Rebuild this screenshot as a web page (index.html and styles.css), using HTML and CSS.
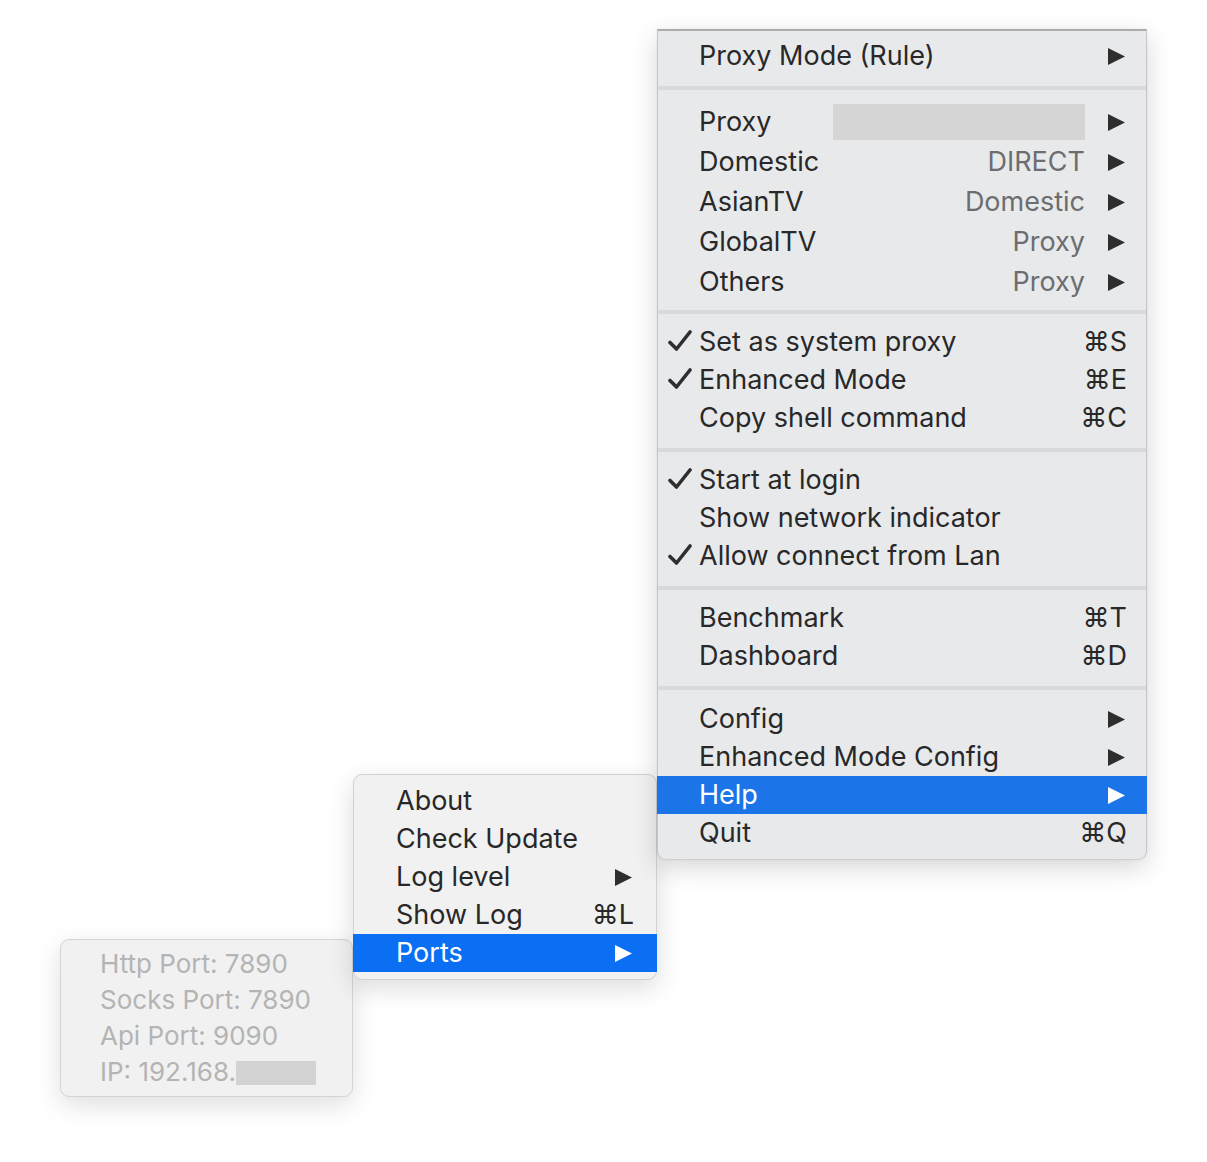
FILE: index.html
```html
<!DOCTYPE html>
<html>
<head>
<meta charset="utf-8">
<link rel="stylesheet" href="styles.css">
</head>
<body>
<div class="stage">
  <div class="menu menu-main">
    <div class="row"><span class="check"></span><span class="label">Proxy Mode (Rule)</span><svg class="arrow" viewBox="0 0 17 17"><path d="M0 0 L17 8.5 L0 17 Z"/></svg></div>
    <div class="sep"></div>
    <div class="group-wide">
      <div class="row row-wide"><span class="check"></span><span class="label">Proxy</span><span class="redact redact-main"></span><svg class="arrow" viewBox="0 0 17 17"><path d="M0 0 L17 8.5 L0 17 Z"/></svg></div>
      <div class="row row-wide"><span class="check"></span><span class="label">Domestic</span><span class="value">DIRECT</span><svg class="arrow" viewBox="0 0 17 17"><path d="M0 0 L17 8.5 L0 17 Z"/></svg></div>
      <div class="row row-wide"><span class="check"></span><span class="label">AsianTV</span><span class="value">Domestic</span><svg class="arrow" viewBox="0 0 17 17"><path d="M0 0 L17 8.5 L0 17 Z"/></svg></div>
      <div class="row row-wide"><span class="check"></span><span class="label">GlobalTV</span><span class="value">Proxy</span><svg class="arrow" viewBox="0 0 17 17"><path d="M0 0 L17 8.5 L0 17 Z"/></svg></div>
      <div class="row row-wide"><span class="check"></span><span class="label">Others</span><span class="value">Proxy</span><svg class="arrow" viewBox="0 0 17 17"><path d="M0 0 L17 8.5 L0 17 Z"/></svg></div>
    </div>
    <div class="sep"></div>
    <div class="row"><span class="check"><svg viewBox="0 0 24 22"><path d="M2 12.5 L8.5 19 L22 2"/></svg></span><span class="label">Set as system proxy</span><span class="key">⌘S</span></div>
    <div class="row"><span class="check"><svg viewBox="0 0 24 22"><path d="M2 12.5 L8.5 19 L22 2"/></svg></span><span class="label">Enhanced Mode</span><span class="key">⌘E</span></div>
    <div class="row"><span class="check"></span><span class="label">Copy shell command</span><span class="key">⌘C</span></div>
    <div class="sep"></div>
    <div class="row"><span class="check"><svg viewBox="0 0 24 22"><path d="M2 12.5 L8.5 19 L22 2"/></svg></span><span class="label">Start at login</span></div>
    <div class="row"><span class="check"></span><span class="label">Show network indicator</span></div>
    <div class="row"><span class="check"><svg viewBox="0 0 24 22"><path d="M2 12.5 L8.5 19 L22 2"/></svg></span><span class="label">Allow connect from Lan</span></div>
    <div class="sep"></div>
    <div class="row"><span class="check"></span><span class="label">Benchmark</span><span class="key">⌘T</span></div>
    <div class="row"><span class="check"></span><span class="label">Dashboard</span><span class="key">⌘D</span></div>
    <div class="sep sep-last"></div>
    <div class="row"><span class="check"></span><span class="label">Config</span><svg class="arrow" viewBox="0 0 17 17"><path d="M0 0 L17 8.5 L0 17 Z"/></svg></div>
    <div class="row"><span class="check"></span><span class="label">Enhanced Mode Config</span><svg class="arrow" viewBox="0 0 17 17"><path d="M0 0 L17 8.5 L0 17 Z"/></svg></div>
    <div class="row active active-main"><span class="check"></span><span class="label">Help</span><svg class="arrow" viewBox="0 0 17 17"><path d="M0 0 L17 8.5 L0 17 Z"/></svg></div>
    <div class="row"><span class="check"></span><span class="label">Quit</span><span class="key">⌘Q</span></div>
  </div>

  <div class="menu menu-help">
    <div class="row"><span class="label">About</span></div>
    <div class="row"><span class="label">Check Update</span></div>
    <div class="row"><span class="label">Log level</span><svg class="arrow" viewBox="0 0 17 17"><path d="M0 0 L17 8.5 L0 17 Z"/></svg></div>
    <div class="row"><span class="label">Show Log</span><span class="key">⌘L</span></div>
    <div class="row active active-sub"><span class="label">Ports</span><svg class="arrow" viewBox="0 0 17 17"><path d="M0 0 L17 8.5 L0 17 Z"/></svg></div>
  </div>

  <div class="menu menu-ports">
    <div class="row row-dis"><span class="label">Http Port: 7890</span></div>
    <div class="row row-dis"><span class="label">Socks Port: 7890</span></div>
    <div class="row row-dis"><span class="label">Api Port: 9090</span></div>
    <div class="row row-dis"><span class="label label-ip">IP: 192.168.<span class="redact redact-ip"></span></span></div>
  </div>
</div>
</body>
</html>
```

FILE: styles.css
```css
html, body {
  margin: 0;
  padding: 0;
  background: #ffffff;
}

.stage {
  position: relative;
  width: 1207px;
  height: 1162px;
  font-family: Inter, "DejaVu Sans", sans-serif;
  font-size: 27px;
  color: #282829;
}

.menu {
  position: absolute;
  box-sizing: border-box;
  display: flex;
  flex-direction: column;
}

.menu-main {
  left: 657px;
  top: 29px;
  width: 490px;
  height: 831px;
  background: #e8e9eb;
  border-top: 2px solid #acacae;
  border-left: 1px solid #c6c6c8;
  border-right: 1px solid #c6c6c8;
  border-bottom: 1px solid #cfcfd1;
  border-radius: 0 0 9px 9px;
  padding: 6px 0 7px;
  box-shadow: 0 8px 26px rgba(0, 0, 0, 0.16), 0 0 2px rgba(0, 0, 0, 0.08);
  z-index: 3;
}

.menu-help {
  left: 353px;
  top: 774px;
  width: 304px;
  height: 206px;
  background: #f1f1f1;
  border: 1px solid #d2d2d2;
  border-radius: 9px;
  padding: 7px 0;
  box-shadow: 0 8px 26px rgba(0, 0, 0, 0.14);
  z-index: 2;
}

.menu-ports {
  left: 60px;
  top: 939px;
  width: 293px;
  height: 158px;
  background: #f1f1f1;
  border: 1px solid #d4d4d4;
  border-radius: 9px;
  padding: 6px 0;
  box-shadow: 0 8px 26px rgba(0, 0, 0, 0.13);
  z-index: 1;
  font-size: 26px;
}

.row {
  display: flex;
  align-items: center;
  box-sizing: border-box;
  height: 38px;
  padding-bottom: 2px;
  flex: none;
  white-space: nowrap;
}

.menu-main .row {
  padding-right: 21px;
}

.row-wide {
  height: 40px;
}

.group-wide {
  padding-top: 3px;
  margin-bottom: -3px;
}

.check {
  width: 41px;
  flex: none;
  display: flex;
  align-items: center;
  padding-left: 10px;
  box-sizing: border-box;
}

.check svg {
  width: 24px;
  height: 22px;
  fill: none;
  stroke: #2e2e2f;
  stroke-width: 3.6;
  stroke-linecap: round;
  stroke-linejoin: round;
}

.label {
  flex: 1;
}

.menu-help .row {
  padding-left: 42px;
  padding-right: 24px;
}

.menu-ports .row {
  padding-left: 39px;
  height: 36px;
}

.value {
  color: #6d6d6f;
  margin-right: 23px;
}

.key {
  margin-right: -2px;
}

.arrow {
  width: 17px;
  height: 17px;
  flex: none;
  fill: #2e2e2f;
  margin-top: 2px;
}

.redact {
  display: inline-block;
  background: #d5d5d5;
}

.redact-main {
  width: 252px;
  height: 36px;
  margin-right: 23px;
  margin-top: 2px;
}

.redact-ip {
  width: 80px;
  height: 24px;
  vertical-align: -4px;
  background: #d3d3d3;
}

.sep {
  height: 4px;
  background: #d8d9db;
  margin: 11px 0 9px;
  flex: none;
}

.sep-last {
  margin-bottom: 10px;
}

.active {
  color: #ffffff;
}

.active .arrow {
  fill: #ffffff;
}

.active-main {
  background: #1b74e8;
  margin: 0 -1px;
  padding-left: 1px;
  padding-right: 22px !important;
}

.active-sub {
  background: #0a6ff3;
  margin: 0 -1px;
  padding-left: 43px !important;
  padding-right: 25px !important;
}

.row-dis {
  color: #b4b4b4;
}
```
